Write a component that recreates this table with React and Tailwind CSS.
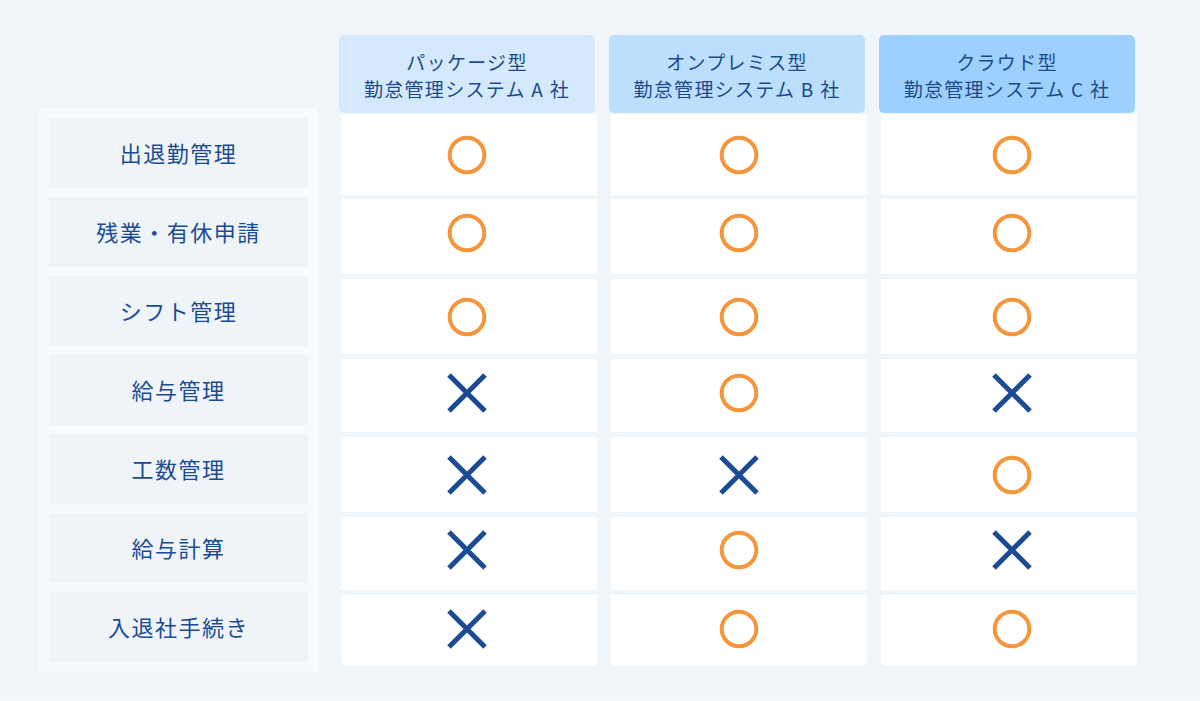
import React from "react";

const labels = ["出退勤管理", "残業・有休申請", "シフト管理", "給与管理", "工数管理", "給与計算", "入退社手続き"];

const columns = [
  { t1: "パッケージ型", t2: "勤怠管理システム A 社", bg: "bg-[#d5e9fd]", shift: "pr-[4px]", marks: ["o", "o", "o", "x", "x", "x", "x"] },
  { t1: "オンプレミス型", t2: "勤怠管理システム B 社", bg: "bg-[#bbdffd]", shift: "pl-[0px]", marks: ["o", "o", "o", "o", "x", "o", "o"] },
  { t1: "クラウド型", t2: "勤怠管理システム C 社", bg: "bg-[#9dd0fc]", shift: "pl-[6px]", marks: ["o", "o", "o", "x", "o", "x", "o"] },
];

const rowStyles = [
  "mt-[1px] h-[81px]",
  "mt-[4px] h-[75px] pb-[8px]",
  "mt-[5px] h-[75px]",
  "mt-[5px] h-[73px] pb-[6px]",
  "mt-[5px] h-[75px]",
  "mt-[5px] h-[73px] pb-[7px]",
  "mt-[5px] h-[71px] pb-[4px] rounded-b-[5px]",
];

function Circle() {
  return (
    <svg width="40" height="40" viewBox="0 0 40 40">
      <circle cx="20" cy="20" r="17.3" fill="none" stroke="#f5963d" strokeWidth="4" />
    </svg>
  );
}

function Cross() {
  return (
    <svg width="42" height="42" viewBox="0 0 42 42">
      <path d="M3 3 L39 39 M39 3 L3 39" stroke="#1b4b93" strokeWidth="5" strokeLinecap="butt" fill="none" />
    </svg>
  );
}

export default function App() {
  const font = { fontFamily: '"Noto Sans CJK JP", "Noto Sans", sans-serif' };
  return (
    <div className="w-[1200px] h-[701px] bg-[#f0f5fa] flex flex-col" style={font}>
      <div className="flex pt-[35px] pl-[39px] flex-1">
        <div className="mt-[73px] w-[279px] h-[564px] bg-[#f8fbfd] p-[10px] flex flex-col gap-[9px]">
          {labels.map((l) => (
            <div
              key={l}
              className="h-[70px] bg-[#eff4f9] flex items-center justify-center text-[22px] tracking-[1.5px] text-[#1a4b94] font-normal pb-[2px]"
            >
              {l}
            </div>
          ))}
        </div>
        <div className="ml-[21px] flex gap-[12px]">
          {columns.map((c, ci) => (
            <div key={ci} className="w-[258px] flex flex-col">
              <div
                className={`w-[256px] h-[78px] rounded-[5px] ${c.bg} flex flex-col items-center justify-center text-[19px] leading-[27px] tracking-[1.3px] text-[#1c4a8c] pt-[1px]`}
              >
                <div>{c.t1}</div>
                <div>{c.t2}</div>
              </div>
              {c.marks.map((m, ri) => (
                <div
                  key={ri}
                  className={`ml-[2px] w-[256px] bg-white flex items-center justify-center ${c.shift} ${rowStyles[ri]}`}
                >
                  {m === "o" ? <Circle /> : <Cross />}
                </div>
              ))}
            </div>
          ))}
        </div>
      </div>
      <div className="h-[5px] bg-[#f5f8fb]" />
    </div>
  );
}
